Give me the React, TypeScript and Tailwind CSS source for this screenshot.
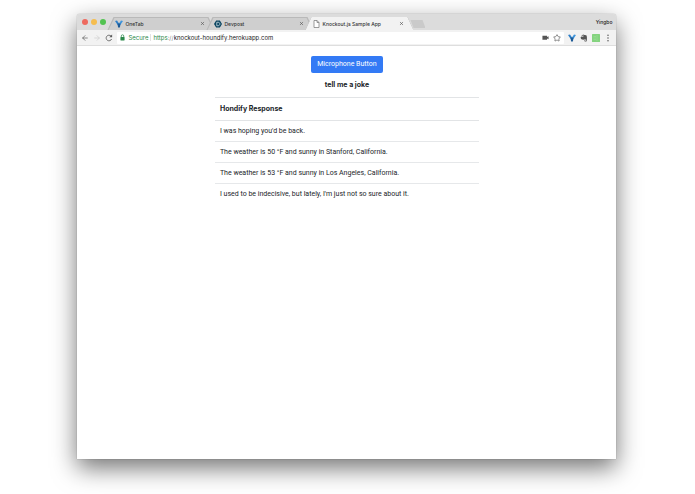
import { ArrowLeft, ArrowRight, Star, X } from 'lucide-react';
import type { ReactNode } from 'react';

const responses = [
  "I was hoping you'd be back.",
  'The weather is 50 °F and sunny in Stanford, California.',
  'The weather is 53 °F and sunny in Los Angeles, California.',
  "I used to be indecisive, but lately, I'm just not so sure about it.",
];

function OneTabIcon() {
  return (
    <svg viewBox="0 0 16 16" className="size-2 shrink-0">
      <path d="M0 2l4-1 4 6-2 4z" fill="#2f7fc8" />
      <path d="M16 2l-4-1-4 6 2 4z" fill="#3f95dc" />
      <path d="M5 7h6L9.800 15H6.200z" fill="#1d5a96" />
    </svg>
  );
}

function DevpostIcon() {
  return (
    <svg viewBox="0 0 16 16" className="size-2 shrink-0">
      <path d="M4.200 1h7.600L16 8l-4.200 7H4.200L0 8z" fill="#0b4560" />
      <path
        d="M5.500 4.500h2.600c2.400 0 3.600 1.500 3.600 3.500s-1.500 3.500-3.700 3.500H5.500z"
        fill="none"
        stroke="#d5e3ea"
        strokeWidth="1.500"
      />
    </svg>
  );
}

function PageIcon() {
  return (
    <svg viewBox="0 0 14 16" className="h-2 w-[7px] shrink-0">
      <path d="M2 1h6l4 4v10H2zM8 1v4h4" fill="#fff" stroke="#7b7b7b" strokeWidth="1.500" />
    </svg>
  );
}

function ReloadIcon() {
  return (
    <svg viewBox="0 0 16 16" className="size-2">
      <path d="M13.200 10A5.600 5.600 0 1 1 12 4.100" fill="none" stroke="#5a5a5a" strokeWidth="1.700" />
      <path d="M14.200 1v5.600H8.600z" fill="#5a5a5a" />
    </svg>
  );
}

function LockIcon() {
  return (
    <svg viewBox="0 0 12 16" className="h-[7px] w-[5px] shrink-0">
      <path d="M3 7V4.500a3 3 0 0 1 6 0V7" fill="none" stroke="#2c8a4b" strokeWidth="1.800" />
      <rect x="1" y="6.500" width="10" height="8.500" rx="1" fill="#2c8a4b" />
    </svg>
  );
}

function CameraIcon() {
  return (
    <svg viewBox="0 0 16 16" className="size-[7px]">
      <path d="M1 4h10.500v3L15 5v7l-3.500-2v3H1z" fill="#555" />
    </svg>
  );
}

function EvernoteIcon() {
  return (
    <svg viewBox="0 0 16 16" className="size-2">
      <path d="M5.500 1.200 1.800 5h3.700z" fill="#555" />
      <path
        d="M6.500 1c1.700 0 2 .7 2.300 1.200 2 .1 3.900.2 4.400 1.100.9 1.800 1 7.200.2 10.200-.3 1.400-1 1.500-2.400 1.500-1.700 0-2.300-.8-2.300-2 0-1.300.8-2 2-2v1.200c-1 0-1 .3-1 .8.100.7 1.900.6 2 0v-2c-2-.3-2.700.1-3.200-.8-.3 1.300-1.200 1.400-2.200 1.200C3.700 11 2 10.600 1.600 8.500c-.2-.9-.3-1.700-.3-2.500h5.200z"
        fill="#555"
      />
    </svg>
  );
}

function GreenIcon() {
  return (
    <svg viewBox="0 0 16 16" className="size-2">
      <rect width="16" height="16" rx="1" fill="#84d37f" />
      <path d="M10 2v12M3 5h5M3 8h5M3 11h5" stroke="#a3e39e" strokeWidth="1" />
    </svg>
  );
}

function MenuIcon() {
  return (
    <svg viewBox="0 0 16 16" className="size-2" fill="#555">
      <circle cx="8" cy="2.500" r="1.500" />
      <circle cx="8" cy="8" r="1.500" />
      <circle cx="8" cy="13.500" r="1.500" />
    </svg>
  );
}

function Tab({ icon, title, active = false }: { icon: ReactNode; title: string; active?: boolean }) {
  return (
    <div className={active ? 'relative z-10 -ml-2 w-[108px] h-[13px]' : 'relative -ml-2 w-[107px] h-[13px]'}>
      <div className="h-full bg-[#b9b9b9] [clip-path:polygon(6px_0,calc(100%-6px)_0,100%_100%,0_100%)]">
        <div
          className={
            active
              ? 'flex h-full items-center gap-[2px] bg-[#f2f2f2] pl-2 pr-[9px] [clip-path:polygon(6px_0,calc(100%-6px)_0,100%_100%,0_100%)]'
              : 'flex h-full items-center gap-[2px] bg-[#cfcfcf] pl-2 pr-[9px] [clip-path:polygon(7px_1px,calc(100%-7px)_1px,calc(100%-1px)_100%,1px_100%)]'
          }
        >
          {icon}
          <span className="flex-1 truncate text-[5px] font-medium leading-[8px] text-[#333]">{title}</span>
          <button aria-label={`Close ${title}`}>
            <X className="size-[5px] text-[#555]" strokeWidth={3} />
          </button>
        </div>
      </div>
    </div>
  );
}

export default function App() {
  return (
    <div className="flex h-screen bg-white pb-[35px] pl-[11.15%] pr-[11.3%] pt-[14px] font-['Inter',sans-serif]">
      <div className="flex flex-1 flex-col rounded-t-[3px] bg-white shadow-[0_0_1px_rgba(0,0,0,0.5),0_9px_24px_rgba(0,0,0,0.55)]">
        {/* tab strip */}
        <div className="flex h-4 items-end rounded-t-[3px] bg-[#dcdcdc]">
          <div className="flex items-center gap-[3px] self-center pl-[5px] pr-[9px]">
            <span className="size-[6px] rounded-full bg-[#ee6a5f]" />
            <span className="size-[6px] rounded-full bg-[#f5bd4f]" />
            <span className="size-[6px] rounded-full bg-[#52c351]" />
          </div>
          <Tab icon={<OneTabIcon />} title="OneTab" />
          <Tab icon={<DevpostIcon />} title="Devpost" />
          <Tab icon={<PageIcon />} title="Knockout.js Sample App" active />
          <button
            aria-label="New tab"
            className="mb-[2px] -ml-[3px] h-2 w-[15px] bg-[#cacaca] [clip-path:polygon(0_0,80%_0,100%_100%,20%_100%)]"
          />
          <span className="ml-auto self-center pr-1 text-[5px] font-medium leading-[8px] text-[#222]">Yingbo</span>
        </div>

        {/* toolbar */}
        <div className="flex h-4 items-center border-b border-[#dedede] bg-[#f2f2f2] px-1">
          <div className="flex items-center gap-1">
            <button aria-label="Back">
              <ArrowLeft className="size-2 text-[#555]" />
            </button>
            <button aria-label="Forward">
              <ArrowRight className="size-2 text-[#ccc]" />
            </button>
            <button aria-label="Reload">
              <ReloadIcon />
            </button>
          </div>
          <div className="ml-1 flex h-3 flex-1 items-center rounded-[1px] bg-white px-[3px] text-[6px] leading-[10px] text-[#222]">
            <LockIcon />
            <span className="ml-[3px] text-[#2c8a4b]">Secure</span>
            <span className="mx-[2px] h-[7px] w-px bg-[#e2e2e2]" />
            <label htmlFor="address" className="text-[#2c8a4b]">
              https<span className="text-[#888]">://</span>
            </label>
            <input
              id="address"
              className="min-w-0 flex-1 bg-transparent outline-none"
              defaultValue="knockout-houndify.herokuapp.com"
            />
            <div className="flex items-center gap-1">
              <CameraIcon />
              <button aria-label="Bookmark">
                <Star className="size-2 text-[#555]" />
              </button>
            </div>
          </div>
          <div className="ml-1 flex items-center gap-1">
            <OneTabIcon />
            <EvernoteIcon />
            <GreenIcon />
            <button aria-label="Menu">
              <MenuIcon />
            </button>
          </div>
        </div>

        {/* page */}
        <main className="flex flex-1 flex-col items-center pt-[10px] text-[7px] leading-[10px] text-[#212529]">
          <button className="rounded-[2px] bg-[#337af5] px-[6px] py-[3px] font-['Roboto',sans-serif] leading-[11px] text-white">
            Microphone Button
          </button>
          <p className="mt-[7px] font-bold">tell me a joke</p>
          <table className="mt-[7px] w-[49%] border-collapse text-left">
            <thead>
              <tr>
                <th className="border-y border-[#e2e4e6] px-[5px] py-[6px] font-bold">Hondify Response</th>
              </tr>
            </thead>
            <tbody className="font-['Roboto',sans-serif]">
              {responses.map((text) => (
                <tr key={text} className="border-t border-[#e6e8ea]">
                  <td className="px-[5px] py-[5px]">{text}</td>
                </tr>
              ))}
            </tbody>
          </table>
        </main>
      </div>
    </div>
  );
}
